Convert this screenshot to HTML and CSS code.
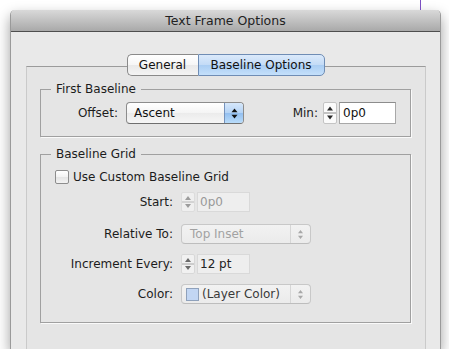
FILE: index.html
```html
<!DOCTYPE html>
<html>
<head>
<meta charset="utf-8">
<title>Text Frame Options</title>
<link rel="stylesheet" href="styles.css">
</head>
<body>
<div class="guide"></div>
<div class="window">
  <div class="titlebar">Text Frame Options</div>
  <div class="tabview">
    <div class="tabs">
      <span class="tab tab-general">General</span>
      <span class="tab tab-selected">Baseline Options</span>
    </div>

    <fieldset class="group g1">
      <legend>First Baseline</legend>
      <div class="row">
        <span class="lbl lbl-offset">Offset:</span>
        <div class="popup">
          <span class="ptext">Ascent</span>
          <span class="parrows"><svg width="7" height="11" viewBox="0 0 7 11"><path d="M3.5 0.5 L6.5 4.2 H0.5Z" fill="#111"/><path d="M3.5 10.5 L6.5 6.8 H0.5Z" fill="#111"/></svg></span>
        </div>
        <span class="lbl lbl-min">Min:</span>
        <span class="stepper"><svg width="14" height="22" viewBox="0 0 14 22"><rect x="0.5" y="0.5" width="13" height="21" rx="1.5" fill="#fbfbfb" stroke="#c4c4c4"/><line x1="1" y1="11" x2="13" y2="11" stroke="#8a8a8a"/><path d="M7 4.5 L10 8.5 H4Z" fill="#2a2a2a"/><path d="M7 17.5 L10 13.5 H4Z" fill="#2a2a2a"/></svg></span>
        <span class="field field-on">0p0</span>
      </div>
    </fieldset>

    <fieldset class="group g2">
      <legend>Baseline Grid</legend>
      <div class="check-row"><span class="checkbox"></span>Use Custom Baseline Grid</div>
      <div class="frow r-start">
        <span class="lbl lbl-grid">Start:</span>
        <span class="stepper sm"><svg width="14" height="20" viewBox="0 0 14 20"><rect x="0.5" y="0.5" width="13" height="19" rx="1.5" fill="#efefef" stroke="#dcdcdc"/><line x1="1" y1="10" x2="13" y2="10" stroke="#b8b8b8"/><path d="M7 4 L10 8 H4Z" fill="#9c9c9c"/><path d="M7 16 L10 12 H4Z" fill="#9c9c9c"/></svg></span>
        <span class="field field-off">0p0</span>
      </div>
      <div class="frow r-rel">
        <span class="lbl lbl-grid">Relative To:</span>
        <div class="popup popup-off">
          <span class="ptext">Top Inset</span>
          <span class="parrows"><svg width="7" height="11" viewBox="0 0 7 11"><path d="M3.5 1 L6 4.2 H1Z" fill="#a8a8a8"/><path d="M3.5 10 L6 6.8 H1Z" fill="#a8a8a8"/></svg></span>
        </div>
      </div>
      <div class="frow r-inc">
        <span class="lbl lbl-grid">Increment Every:</span>
        <span class="stepper sm"><svg width="14" height="20" viewBox="0 0 14 20"><rect x="0.5" y="0.5" width="13" height="19" rx="1.5" fill="#f1f1f1" stroke="#d8d8d8"/><line x1="1" y1="10" x2="13" y2="10" stroke="#a8a8a8"/><path d="M7 4 L10 8 H4Z" fill="#6a6a6a"/><path d="M7 16 L10 12 H4Z" fill="#6a6a6a"/></svg></span>
        <span class="field field-off field-dark">12 pt</span>
      </div>
      <div class="frow r-color">
        <span class="lbl lbl-grid">Color:</span>
        <div class="popup popup-off">
          <span class="swatch"></span>
          <span class="ptext ptext-color">(Layer Color)</span>
          <span class="parrows"><svg width="7" height="11" viewBox="0 0 7 11"><path d="M3.5 1 L6 4.2 H1Z" fill="#a8a8a8"/><path d="M3.5 10 L6 6.8 H1Z" fill="#a8a8a8"/></svg></span>
        </div>
      </div>
    </fieldset>
  </div>
</div>
</body>
</html>
```

FILE: styles.css
```css
html, body {
  margin: 0;
  padding: 0;
}
body {
  width: 449px;
  height: 349px;
  overflow: hidden;
  position: relative;
  background: #ffffff;
  font-family: "DejaVu Sans", "Liberation Sans", sans-serif;
  font-size: 12px;
  color: #1c1c1c;
}

.guide {
  position: absolute;
  left: 420px;
  top: 0;
  width: 1px;
  height: 10px;
  background: #7b4fc1;
}

.window {
  margin: 10px 0 0 10px;
  width: 431px;
  height: 339px;
  box-sizing: border-box;
  background: #e9e9e9;
  border-left: 1px solid #9a9a9a;
  border-right: 1px solid #9a9a9a;
  border-radius: 5px 5px 0 0;
  box-shadow: 0 6px 14px rgba(0, 0, 0, 0.38);
}

.titlebar {
  height: 21px;
  border-bottom: 1px solid #4e4e4e;
  background: linear-gradient(#d9d9d9, #a9a9a9);
  border-radius: 5px 5px 0 0;
  text-align: center;
  line-height: 22px;
  font-size: 12.5px;
  color: #222;
}

.tabview {
  margin: 34px 14px 0 15px;
  height: 283px;
  box-sizing: border-box;
  border-top: 1px solid #9b9b9b;
  border-left: 1px solid #cacaca;
  border-right: 1px solid #cacaca;
  background: #e5e5e5;
  padding: 0 14px 0 13px;
}

.tabs {
  display: flex;
  justify-content: center;
  margin-top: -13px;
}
.tab {
  height: 22px;
  box-sizing: border-box;
  display: flex;
  align-items: center;
  justify-content: center;
  border: 1px solid #8a8a8a;
  color: #111;
}
.tab-general {
  width: 71px;
  border-right: none;
  border-radius: 5px 0 0 5px;
  background: linear-gradient(#ffffff, #f6f6f6 50%, #e9e9e9 51%, #f4f4f4);
}
.tab-selected {
  width: 127px;
  border-color: #6f8db5;
  border-radius: 0 5px 5px 0;
  background: linear-gradient(#dbeafb, #c3dbf6 50%, #aacdf3 51%, #c4e0fb);
}

.group {
  margin: 0;
  min-width: 0;
  border: 1px solid #a0a0a0;
  box-shadow: 1px 1px 0 #fafafa;
  padding: 6px 14px 12px 10px;
}
.group legend {
  padding: 0 5px;
  line-height: 14px;
  font-size: 12px;
  color: #1c1c1c;
}
.g1 {
  margin-top: 6px;
}
.g2 {
  margin-top: 10px;
  padding-top: 8px;
  padding-bottom: 18px;
}

.row {
  display: flex;
  align-items: center;
  height: 22px;
}
.lbl {
  white-space: nowrap;
}
.lbl-offset {
  width: 67px;
  text-align: right;
  margin-right: 8px;
}
.lbl-min {
  margin-left: auto;
  margin-right: 5px;
}
.lbl-grid {
  width: 122px;
  text-align: right;
  margin-right: 8px;
}

.popup {
  display: flex;
  align-items: center;
  width: 118px;
  height: 22px;
  box-sizing: border-box;
  border: 1px solid #8c8c8c;
  border-bottom-color: #6f6f6f;
  border-radius: 4px;
  background: linear-gradient(#ffffff, #f4f4f4 50%, #ebebeb 51%, #f6f6f6);
  overflow: hidden;
}
.ptext {
  flex: 1;
  padding-left: 7px;
  white-space: nowrap;
  color: #111;
}
.parrows {
  width: 18px;
  align-self: stretch;
  display: flex;
  align-items: center;
  justify-content: center;
  border-left: 1px solid #7592bb;
  background: linear-gradient(#d6e7fa, #b4d3f5 50%, #93bff0 51%, #b9dcfa);
}

.popup-off {
  width: 130px;
  height: 20px;
  border-color: #c8c8c8;
  border-bottom-color: #bdbdbd;
  background: linear-gradient(#f2f2f2, #ebebeb);
}
.popup-off .ptext {
  padding-left: 8px;
  color: #a2a2a2;
}
.popup-off .parrows {
  width: 19px;
  border-left: 1px solid #d6d6d6;
  background: none;
}
.swatch {
  width: 13px;
  height: 13px;
  box-sizing: border-box;
  margin-left: 4px;
  background: #c2d6f3;
  border: 1px solid #8fa1bb;
}
.popup-off .ptext-color {
  padding-left: 3px;
  color: #3a3a3a;
}

.stepper {
  display: flex;
  margin-right: 2px;
}
.stepper svg {
  display: block;
}

.field {
  box-sizing: border-box;
  white-space: nowrap;
}
.field-on {
  width: 57px;
  height: 22px;
  line-height: 20px;
  padding-left: 3px;
  background: #ffffff;
  border: 1px solid #a8a8a8;
  border-top-color: #8c8c8c;
  color: #111;
}
.field-off {
  width: 53px;
  height: 20px;
  line-height: 18px;
  padding-left: 2px;
  background: #eeeeee;
  border: 1px solid #d9d9d9;
  color: #999999;
}
.field-dark {
  color: #222222;
}

.check-row {
  display: flex;
  align-items: center;
  height: 16px;
  padding-left: 4px;
}
.checkbox {
  width: 14px;
  height: 14px;
  box-sizing: border-box;
  margin-right: 4px;
  border: 1px solid #8d8d8d;
  border-radius: 2px;
  background: linear-gradient(#ffffff, #f2f2f2 50%, #e4e4e4 51%, #f3f3f3);
}

.frow {
  display: flex;
  align-items: center;
  height: 20px;
}
.r-start { margin-top: 7px; }
.r-rel { margin-top: 12px; }
.r-inc { margin-top: 10px; }
.r-color { margin-top: 10px; }
```
